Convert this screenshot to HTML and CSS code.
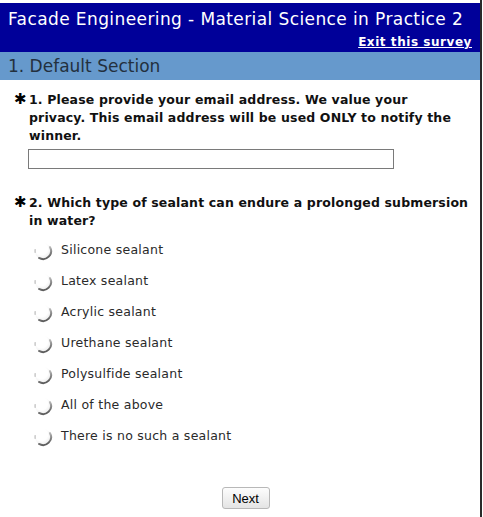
FILE: index.html
```html
<!DOCTYPE html>
<html>
<head>
<meta charset="utf-8">
<link rel="stylesheet" href="styles.css">
</head>
<body>
<div class="page">
  <div class="header">
    <div class="title">Facade Engineering - Material Science in Practice 2</div>
    <div class="exit"><a href="#">Exit this survey</a></div>
  </div>
  <div class="section">1. Default Section</div>
  <div class="question">
    <div class="qtext"><span class="req">&#x2731;</span><span class="qbody">1. Please provide your email address. We value your<br>privacy. This email address will be used ONLY to notify the winner.</span></div>
    <input class="email" type="text">
  </div>
  <div class="question q2">
    <div class="qtext"><span class="req">&#x2731;</span><span class="qbody">2. Which type of sealant can endure a prolonged submersion in water?</span></div>
    <svg class="defs" width="0" height="0"><defs><linearGradient id="g" x1="0" y1="0" x2="0.3" y2="1"><stop offset="0" stop-color="#d8d8d8"/><stop offset="0.6" stop-color="#8c8c8c"/><stop offset="1" stop-color="#5e5e5e"/></linearGradient><radialGradient id="f" cx="0.4" cy="0.35" r="0.65"><stop offset="0.6" stop-color="#ffffff"/><stop offset="1" stop-color="#ececec"/></radialGradient></defs></svg>
    <ul class="options">
      <li><svg class="radio" viewBox="0 0 20 20"><circle cx="10" cy="10" r="8" fill="url(#f)"/><path d="M16.93 6 A8 8 0 0 1 6 16.93" fill="none" stroke="url(#g)" stroke-width="2" stroke-linecap="round"/><path d="M2.27 8.2 A8 8 0 0 0 2.27 11.8" fill="none" stroke="#c4c4c4" stroke-width="1.4"/></svg><span>Silicone sealant</span></li>
      <li><svg class="radio" viewBox="0 0 20 20"><circle cx="10" cy="10" r="8" fill="url(#f)"/><path d="M16.93 6 A8 8 0 0 1 6 16.93" fill="none" stroke="url(#g)" stroke-width="2" stroke-linecap="round"/><path d="M2.27 8.2 A8 8 0 0 0 2.27 11.8" fill="none" stroke="#c4c4c4" stroke-width="1.4"/></svg><span>Latex sealant</span></li>
      <li><svg class="radio" viewBox="0 0 20 20"><circle cx="10" cy="10" r="8" fill="url(#f)"/><path d="M16.93 6 A8 8 0 0 1 6 16.93" fill="none" stroke="url(#g)" stroke-width="2" stroke-linecap="round"/><path d="M2.27 8.2 A8 8 0 0 0 2.27 11.8" fill="none" stroke="#c4c4c4" stroke-width="1.4"/></svg><span>Acrylic sealant</span></li>
      <li><svg class="radio" viewBox="0 0 20 20"><circle cx="10" cy="10" r="8" fill="url(#f)"/><path d="M16.93 6 A8 8 0 0 1 6 16.93" fill="none" stroke="url(#g)" stroke-width="2" stroke-linecap="round"/><path d="M2.27 8.2 A8 8 0 0 0 2.27 11.8" fill="none" stroke="#c4c4c4" stroke-width="1.4"/></svg><span>Urethane sealant</span></li>
      <li><svg class="radio" viewBox="0 0 20 20"><circle cx="10" cy="10" r="8" fill="url(#f)"/><path d="M16.93 6 A8 8 0 0 1 6 16.93" fill="none" stroke="url(#g)" stroke-width="2" stroke-linecap="round"/><path d="M2.27 8.2 A8 8 0 0 0 2.27 11.8" fill="none" stroke="#c4c4c4" stroke-width="1.4"/></svg><span>Polysulfide sealant</span></li>
      <li><svg class="radio" viewBox="0 0 20 20"><circle cx="10" cy="10" r="8" fill="url(#f)"/><path d="M16.93 6 A8 8 0 0 1 6 16.93" fill="none" stroke="url(#g)" stroke-width="2" stroke-linecap="round"/><path d="M2.27 8.2 A8 8 0 0 0 2.27 11.8" fill="none" stroke="#c4c4c4" stroke-width="1.4"/></svg><span>All of the above</span></li>
      <li><svg class="radio" viewBox="0 0 20 20"><circle cx="10" cy="10" r="8" fill="url(#f)"/><path d="M16.93 6 A8 8 0 0 1 6 16.93" fill="none" stroke="url(#g)" stroke-width="2" stroke-linecap="round"/><path d="M2.27 8.2 A8 8 0 0 0 2.27 11.8" fill="none" stroke="#c4c4c4" stroke-width="1.4"/></svg><span>There is no such a sealant</span></li>
    </ul>
  </div>
  <div class="footer"><button class="next" type="button">Next</button></div>
</div>
</body>
</html>
```

FILE: styles.css
```css
html, body {
  margin: 0;
  padding: 0;
  background: #ffffff;
}
.page {
  width: 482px;
  height: 517px;
  border-right: 2px solid #2a2a2a;
  padding-top: 3px;
  font-family: "DejaVu Sans", Verdana, sans-serif;
  box-sizing: border-box;
}
.header {
  background: #000099;
  color: #ffffff;
  height: 49px;
  padding: 5px 8px 0 8px;
  box-sizing: border-box;
}
.title {
  font-size: 17px;
  line-height: 22px;
  letter-spacing: 0.4px;
  white-space: nowrap;
}
.exit {
  text-align: right;
  font-size: 12px;
  font-weight: bold;
  line-height: 18px;
  letter-spacing: 0.55px;
  margin-top: 3px;
}
.exit a {
  color: #ffffff;
}
.section {
  background: #6699cc;
  color: #23303e;
  font-size: 17px;
  height: 28px;
  line-height: 28px;
  padding-left: 8px;
}
.question {
  padding: 11px 8px 0 14px;
}
.qtext {
  display: flex;
  font-size: 12.5px;
  font-weight: bold;
  line-height: 18px;
  letter-spacing: 0.15px;
  color: #111;
}
.req {
  width: 15px;
  flex: none;
  font-size: 15px;
  line-height: 17px;
  letter-spacing: 0;
  color: #000;
}
.qbody {
  max-width: 440px;
}
.email {
  display: block;
  margin: 4px 0 0 14px;
  width: 366px;
  height: 20px;
  box-sizing: border-box;
  border: 1px solid #7a7a7a;
  padding: 0;
}
.q2 {
  padding-top: 25px;
}
.defs {
  position: absolute;
}
.options {
  list-style: none;
  margin: 4px 0 0 0;
  padding: 0 0 0 19px;
}
.options li {
  display: flex;
  align-items: center;
  height: 31px;
  font-size: 12.5px;
  letter-spacing: 0.25px;
  color: #2a2a2a;
}
.radio {
  width: 20px;
  height: 20px;
  margin-right: 8px;
  margin-top: 2px;
  flex: none;
}
.footer {
  text-align: center;
  padding-top: 36px;
  padding-left: 11px;
}
.next {
  font-family: "Liberation Sans", Arial, sans-serif;
  font-size: 13px;
  width: 48px;
  height: 22px;
  padding: 0;
  background: linear-gradient(#fdfdfd, #e4e4e4);
  border: 1px solid #b8b8b8;
  border-radius: 3px;
  color: #000;
}
```
